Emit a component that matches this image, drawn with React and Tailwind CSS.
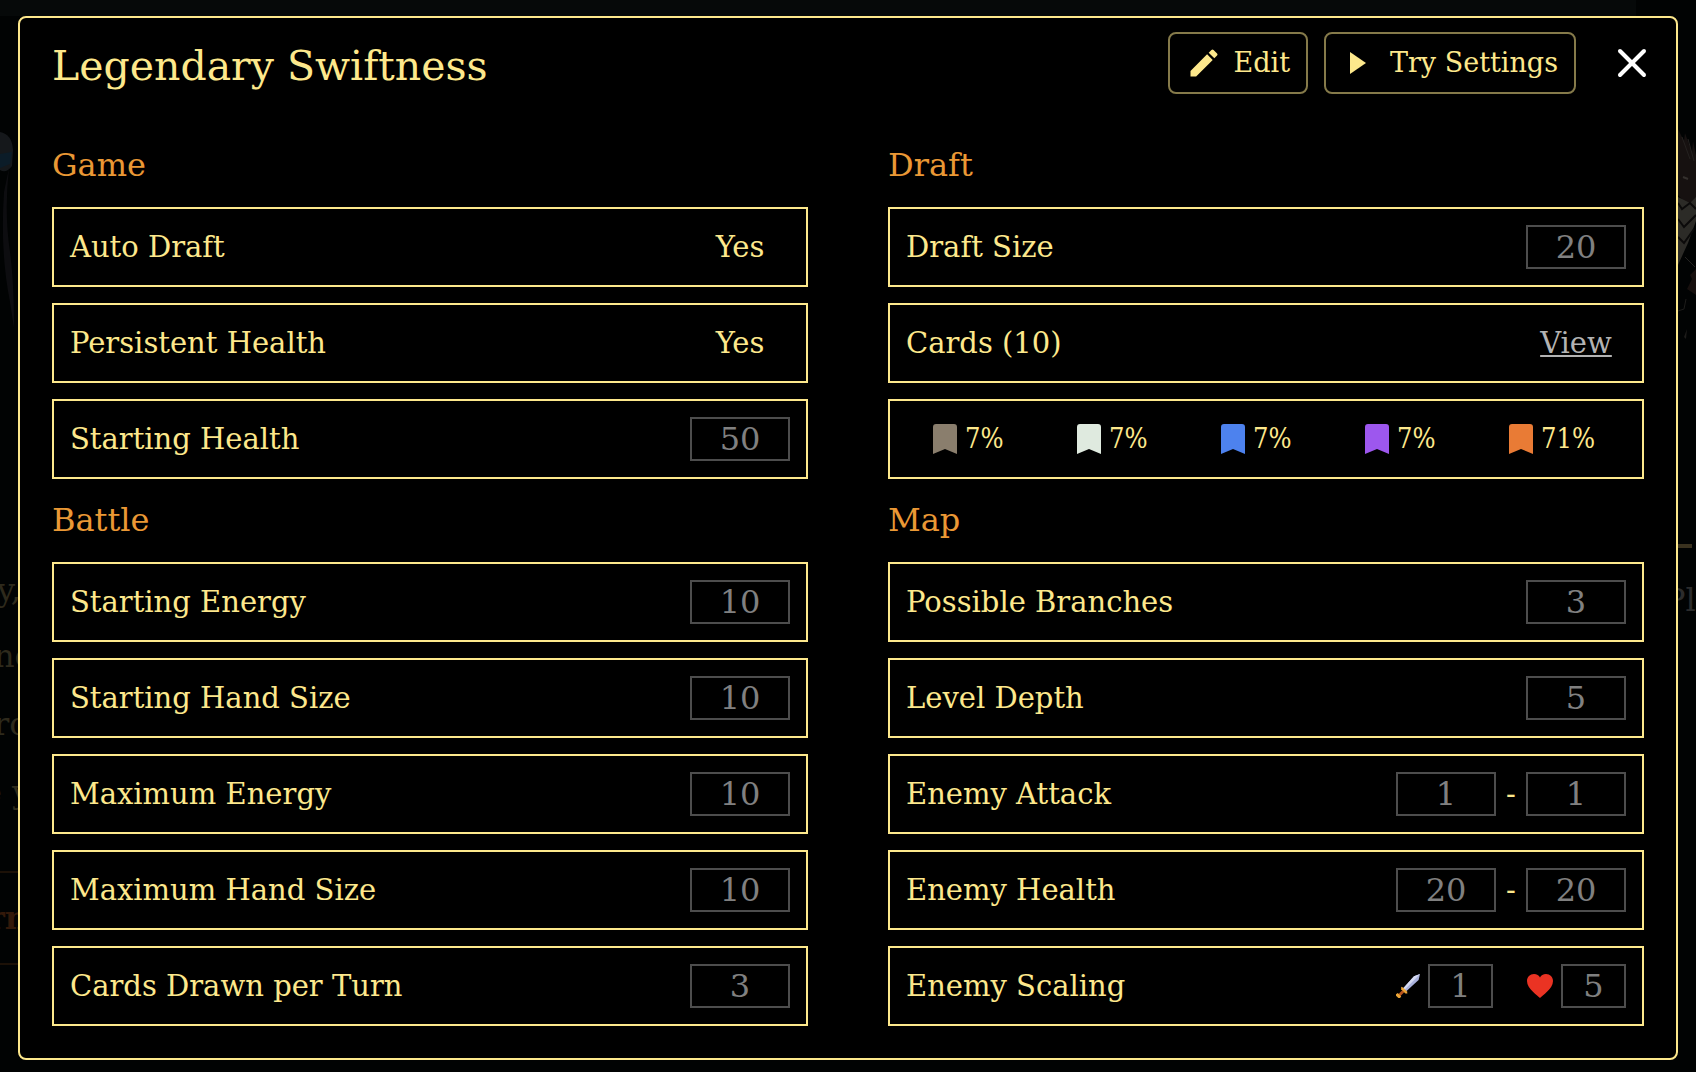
import { X } from "lucide-react";
import { MdEdit } from "react-icons/md";

const gameRows = [
  { label: "Auto Draft", text: "Yes" },
  { label: "Persistent Health", text: "Yes" },
  { label: "Starting Health", values: [50] },
];

const battleRows = [
  { label: "Starting Energy", values: [10] },
  { label: "Starting Hand Size", values: [10] },
  { label: "Maximum Energy", values: [10] },
  { label: "Maximum Hand Size", values: [10] },
  { label: "Cards Drawn per Turn", values: [3] },
];

const mapRows = [
  { label: "Possible Branches", values: [3] },
  { label: "Level Depth", values: [5] },
  { label: "Enemy Attack", values: [1, 1] },
  { label: "Enemy Health", values: [20, 20] },
];

const rarities = [
  { name: "Common", color: "text-[#8a7e6d]", chance: "7%" },
  { name: "Uncommon", color: "text-[#dfeadf]", chance: "7%" },
  { name: "Rare", color: "text-[#4d82ee]", chance: "7%" },
  { name: "Epic", color: "text-[#9d57ee]", chance: "7%" },
  { name: "Legendary", color: "text-[#e97b35]", chance: "71%" },
];

const Bookmark = ({ className }) => (
  <svg viewBox="0 0 24 30" fill="currentColor" className={`h-[30px] w-6 shrink-0 ${className}`}>
    <path d="M3 0H21Q24 0 24 3V30L12 25L0 30V3Q0 0 3 0Z" />
  </svg>
);

const Sword = () => (
  <svg viewBox="0 0 24 24" className="h-6 w-6 shrink-0">
    <path d="M7 14.5L18 2.2L24 0L22.6 6L10 17.5Z" fill="#a9b1dc" />
    <path d="M7 14.5L18 2.2L24 0L8.4 16Z" fill="#d5daf2" />
    <path d="M2 20.5L6.5 16L8.5 18L4 22.5Z" fill="#b5531c" />
    <path d="M5.2 12.8L7 13.4L11 17.6L11.4 19.6L9.4 19.4L5.2 15.2Z" fill="#eda637" />
    <path d="M0 20.2L1.8 19L5.2 22.4L4 24L2.4 24L0 21.8Z" fill="#eda637" />
  </svg>
);

const Heart = () => (
  <svg viewBox="0 0 26 24" className="h-6 w-[26px] shrink-0">
    <path
      d="M13 24C11 21.5 0 15 0 7C0 3 3 0 7 0C9.8 0 12 1.4 13 3.5C14 1.4 16.2 0 19 0C23 0 26 3 26 7C26 15 15 21.5 13 24Z"
      fill="#ea3323"
    />
  </svg>
);

const NumberBox = ({ label, value, small }) => (
  <input
    type="text"
    readOnly
    aria-label={label}
    defaultValue={value}
    className={`h-11 border-2 border-[#4d4d4d] bg-transparent p-0 text-center text-[32px] text-[#808080] outline-none ${
      small ? "w-[65px]" : "w-[100px]"
    }`}
  />
);

const Row = ({ label, children }) => (
  <li className="flex h-20 items-center justify-between border-2 border-[#fde88c] px-4">
    <span>{label}</span>
    {children}
  </li>
);

const SettingRow = ({ label, text, values }) => (
  <Row label={label}>
    {text && <span className="w-[100px] text-center">{text}</span>}
    {values && (
      <span className="flex items-center">
        {values.map((value, i) => (
          <span key={i} className="flex items-center">
            {i > 0 && <span className="w-[30px] text-center">-</span>}
            <NumberBox label={i > 0 ? `${label} maximum` : label} value={value} />
          </span>
        ))}
      </span>
    )}
  </Row>
);

const Section = ({ title, children }) => (
  <section>
    <h2 className="mb-4 text-[32px] leading-[51px] text-[#ea9835]">{title}</h2>
    <ul className="flex flex-col gap-4">{children}</ul>
  </section>
);

// dimmed page that shows around the edges of the dialog
const Backdrop = () => (
  <div aria-hidden="true" className="absolute inset-0 overflow-hidden bg-[#010303] text-[32px] leading-10 text-[#2e2a1c]">
    <div className="absolute top-0 right-[60px] left-0 h-4 bg-[#060909]" />
    <svg viewBox="0 0 20 200" className="absolute top-[132px] left-0 h-[200px] w-5">
      <path d="M0 0Q12 2 13 18L12 34Q6 42 0 38Z" fill="#15181b" />
      <path d="M0 22L12 20L10 32L0 36Z" fill="#0b1c28" />
      <path d="M9 36Q4 80 10 120Q14 150 14 196L10 170Q0 120 4 60Z" fill="#0d0d10" />
    </svg>
    <svg viewBox="0 0 20 220" className="absolute top-[125px] right-0 h-[220px] w-5">
      <path d="M2 4L8 16L9 8L16 28L17 16L20 30V90L2 70Z" fill="#161110" />
      <path d="M6 12L14 34M12 14L18 36" stroke="#24211f" strokeWidth="1" />
      <path d="M7 52L12 54" stroke="#34302d" strokeWidth="2" />
      <path d="M2 72L14 78L20 72V96L12 118L2 140Z" fill="#2c2b27" />
      <path d="M2 78L6 84L14 78L20 84M2 94L8 102L20 90M2 112L8 118L18 104" fill="none" stroke="#0b0a0a" strokeWidth="2" />
      <path d="M9 132L19 142" stroke="#242321" strokeWidth="1" />
      <path d="M20 144L14 150L16 154L11 164L20 170Z" fill="#17100e" />
      <path d="M2 186L8 184L10 174" fill="none" stroke="#1d1c1a" strokeWidth="1" />
      <path d="M8 212L11 204L10 214Z" fill="#1d1c1a" />
    </svg>
    <div className="absolute top-[544px] right-1 h-1 w-4 bg-[#3a321f]" />
    <span className="absolute top-[570px] left-[-3px]">y,</span>
    <span className="absolute top-[636px] left-[-6px]">no</span>
    <span className="absolute top-[704px] left-[-6px]">ro</span>
    <span className="absolute top-[772px] left-[-17px]">e y</span>
    <span className="absolute top-[580px] left-[calc(100%-32px)] text-[#2c2c2c]">Pla</span>
    <div className="absolute top-[871px] left-0 flex h-[94px] w-8 items-center border-y-2 border-[#1c1107] font-bold text-[#33190a]">
      <span className="-ml-3">rn</span>
    </div>
  </div>
);

const App = () => {
  return (
    <div className="relative min-h-screen px-[18px] pt-4 pb-3 font-['DejaVu_Serif',serif] text-[29px] leading-10 text-[#fde88c]">
      <Backdrop />

      <main className="relative rounded-lg border-2 border-[#fde88c] bg-black px-8 pt-3.5 pb-8">
        <header className="flex items-start justify-between">
          <h1 className="text-[41px] leading-[68px]">Legendary Swiftness</h1>
          <div className="flex items-center gap-4 text-[27px]">
            <button
              type="button"
              className="flex h-[62px] w-[140px] items-center justify-between rounded-lg border-2 border-[#857a4a] px-4"
            >
              <MdEdit className="h-9 w-9" />
              Edit
            </button>
            <button
              type="button"
              className="flex h-[62px] w-[252px] items-center justify-between rounded-lg border-2 border-[#857a4a] pr-4 pl-6"
            >
              <svg viewBox="0 0 16 22" fill="currentColor" className="h-[22px] w-4">
                <path d="M0 0L16 11L0 22Z" />
              </svg>
              Try Settings
            </button>
            <button type="button" aria-label="Close" className="ml-7 flex w-6 justify-center text-white">
              <X size={48} strokeWidth={2} className="shrink-0" />
            </button>
          </div>
        </header>

        <div className="mt-10 grid grid-cols-2 gap-x-20 gap-y-4">
          <Section title="Game">
            {gameRows.map((row) => (
              <SettingRow key={row.label} {...row} />
            ))}
          </Section>

          <Section title="Draft">
            <SettingRow label="Draft Size" values={[20]} />
            <Row label="Cards (10)">
              <a href="#cards" className="w-[100px] text-center text-[#b3b3b3] underline">
                View
              </a>
            </Row>
            <li className="grid h-20 grid-cols-5 items-center border-2 border-[#fde88c] px-4 font-['DejaVu_Serif_Condensed','DejaVu_Serif',serif] text-[27px]">
              {rarities.map((rarity) => (
                <span key={rarity.name} title={rarity.name} className="flex items-center gap-2 pl-[27px]">
                  <Bookmark className={rarity.color} />
                  {rarity.chance}
                </span>
              ))}
            </li>
          </Section>

          <Section title="Battle">
            {battleRows.map((row) => (
              <SettingRow key={row.label} {...row} />
            ))}
          </Section>

          <Section title="Map">
            {mapRows.map((row) => (
              <SettingRow key={row.label} {...row} />
            ))}
            <Row label="Enemy Scaling">
              <span className="flex items-center gap-2">
                <Sword />
                <NumberBox label="Attack scaling" value={1} small />
                <span className="ml-[26px] flex items-center gap-2">
                  <Heart />
                  <NumberBox label="Health scaling" value={5} small />
                </span>
              </span>
            </Row>
          </Section>
        </div>
      </main>
    </div>
  );
};

export default App;
